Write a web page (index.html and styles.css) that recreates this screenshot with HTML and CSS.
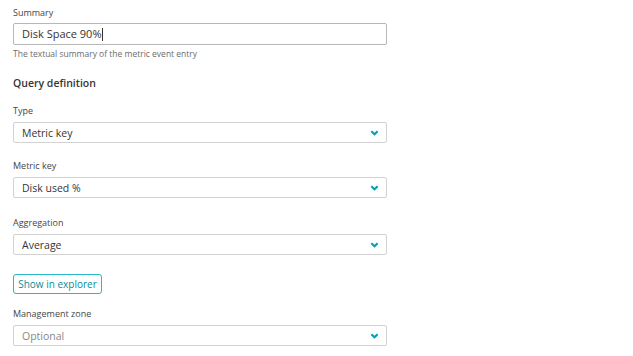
FILE: index.html
```html
<!DOCTYPE html>
<html lang="en">
<head>
  <meta charset="UTF-8" />
  <title>Metric event</title>
  <link rel="stylesheet" href="styles.css">
</head>
<body>
  <form class="form">
    <div class="field">
      <label class="field-label">Summary</label>
      <div class="text-input">Disk Space 90%<span class="caret"></span></div>
      <p class="help">The textual summary of the metric event entry</p>
    </div>

    <h2 class="section-title">Query definition</h2>

    <div class="field">
      <label class="field-label">Type</label>
      <div class="select">
        <span>Metric key</span>
        <svg class="chevron" viewBox="0 0 10 6" width="9" height="6"><path d="M1.5 1 L5 4.5 L8.5 1" /></svg>
      </div>
    </div>

    <div class="field">
      <label class="field-label">Metric key</label>
      <div class="select">
        <span>Disk used %</span>
        <svg class="chevron" viewBox="0 0 10 6" width="9" height="6"><path d="M1.5 1 L5 4.5 L8.5 1" /></svg>
      </div>
    </div>

    <div class="field field-wide">
      <label class="field-label">Aggregation</label>
      <div class="select">
        <span>Average</span>
        <svg class="chevron" viewBox="0 0 10 6" width="9" height="6"><path d="M1.5 1 L5 4.5 L8.5 1" /></svg>
      </div>
    </div>

    <div class="actions">
      <button type="button" class="btn-outline">Show in explorer</button>
    </div>

    <div class="field">
      <label class="field-label">Management zone</label>
      <div class="select">
        <span class="placeholder">Optional</span>
        <svg class="chevron" viewBox="0 0 10 6" width="9" height="6"><path d="M1.5 1 L5 4.5 L8.5 1" /></svg>
      </div>
    </div>
  </form>
</body>
</html>
```

FILE: styles.css
```css
html, body {
  margin: 0;
  padding: 0;
}

body {
  font-family: 'Open Sans', 'Noto Sans', sans-serif;
  background-color: #fff;
  color: #454646;
}

.form {
  width: 374px;
  padding: 6px 0 0 13px;
  display: flex;
  flex-direction: column;
}

.field {
  display: flex;
  flex-direction: column;
  margin-bottom: 16px;
}

.field-wide {
  margin-top: 2px;
}

.field-label {
  font-size: 9px;
  line-height: 14px;
  color: #454646;
  margin-bottom: 4px;
}

.field:first-child .field-label {
  margin-bottom: 3px;
}

.text-input {
  height: 20px;
  border: 1px solid #b7b7b7;
  border-radius: 2px;
  font-size: 11px;
  line-height: 20px;
  padding: 0 8px;
  color: #353535;
  display: flex;
  align-items: center;
}

.caret {
  display: inline-block;
  width: 1px;
  height: 13px;
  background: #353535;
}

.help {
  margin: 3px 0 0;
  font-size: 8.5px;
  line-height: 12px;
  color: #6d6d6d;
}

.section-title {
  margin: 0 0 14px;
  font-size: 10.5px;
  line-height: 14px;
  font-weight: 600;
  color: #353535;
}

.select {
  height: 19px;
  border: 1px solid #d2d2d2;
  border-radius: 2px;
  padding: 0 7px 0 8px;
  font-size: 10.5px;
  display: flex;
  align-items: center;
  justify-content: space-between;
  color: #353535;
}

.placeholder {
  color: #898989;
}

.chevron {
  fill: none;
  stroke: #00a1b2;
  stroke-width: 2.3;
}

.actions {
  display: flex;
  margin: 3px 0 13px;
}

.btn-outline {
  height: 20px;
  width: 89px;
  padding: 0;
  border: 1px solid #2ab6c4;
  border-radius: 3px;
  background: #fff;
  color: #0a8d99;
  font-family: inherit;
  font-size: 10px;
  font-weight: 400;
}
```
